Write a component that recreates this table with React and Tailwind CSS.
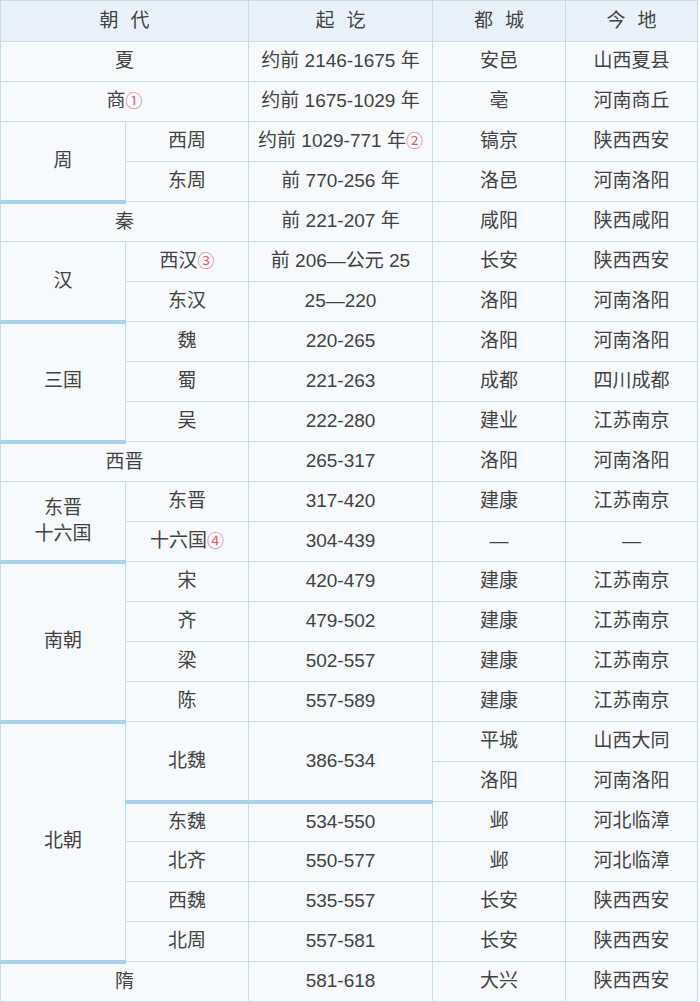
import React from "react";

const cell = "border border-[#c6dee6] p-0 text-center align-middle";
const thick = "border-b-4 border-b-[#a8d3ec]";

function Mark({ n }) {
  return <span className="text-[#e0606e] text-[17px]">{n}</span>;
}

function R({ children }) {
  return <tr className="h-[40px]">{children}</tr>;
}

// header label with a wide gap between the two characters
function Head({ a, b, span }) {
  return (
    <th colSpan={span} className={`${cell} font-normal`}>
      {a}
      <span className="inline-block w-[12px]" />
      {b}
    </th>
  );
}

export default function App() {
  return (
    <div className="w-[700px] h-[1002px] bg-[#f6fafd] font-['Liberation_Sans','Noto_Sans_CJK_SC',sans-serif] text-[19px] text-[#424242]">
      <table className="table-fixed border-collapse w-[697px] bg-[#f6fafd]">
        <colgroup>
          <col className="w-[125px]" />
          <col className="w-[123px]" />
          <col className="w-[184px]" />
          <col className="w-[133px]" />
          <col className="w-[132px]" />
        </colgroup>
        <thead>
          <tr className="h-[41px] bg-[#e9f2fa]">
            <Head a="朝" b="代" span={2} />
            <Head a="起" b="讫" />
            <Head a="都" b="城" />
            <Head a="今" b="地" />
          </tr>
        </thead>
        <tbody>
          <R>
            <td colSpan={2} className={cell}>夏</td>
            <td className={cell}>约前 2146-1675 年</td>
            <td className={cell}>安邑</td>
            <td className={cell}>山西夏县</td>
          </R>
          <R>
            <td colSpan={2} className={cell}>商<Mark n="①" /></td>
            <td className={cell}>约前 1675-1029 年</td>
            <td className={cell}>亳</td>
            <td className={cell}>河南商丘</td>
          </R>
          <R>
            <td rowSpan={2} className={`${cell} ${thick}`}>周</td>
            <td className={cell}>西周</td>
            <td className={cell}>约前 1029-771 年<Mark n="②" /></td>
            <td className={cell}>镐京</td>
            <td className={cell}>陕西西安</td>
          </R>
          <R>
            <td className={cell}>东周</td>
            <td className={cell}>前 770-256 年</td>
            <td className={cell}>洛邑</td>
            <td className={cell}>河南洛阳</td>
          </R>
          <R>
            <td colSpan={2} className={cell}>秦</td>
            <td className={cell}>前 221-207 年</td>
            <td className={cell}>咸阳</td>
            <td className={cell}>陕西咸阳</td>
          </R>
          <R>
            <td rowSpan={2} className={`${cell} ${thick}`}>汉</td>
            <td className={cell}>西汉<Mark n="③" /></td>
            <td className={cell}>前 206—公元 25</td>
            <td className={cell}>长安</td>
            <td className={cell}>陕西西安</td>
          </R>
          <R>
            <td className={cell}>东汉</td>
            <td className={cell}>25—220</td>
            <td className={cell}>洛阳</td>
            <td className={cell}>河南洛阳</td>
          </R>
          <R>
            <td rowSpan={3} className={`${cell} ${thick}`}>三国</td>
            <td className={cell}>魏</td>
            <td className={cell}>220-265</td>
            <td className={cell}>洛阳</td>
            <td className={cell}>河南洛阳</td>
          </R>
          <R>
            <td className={cell}>蜀</td>
            <td className={cell}>221-263</td>
            <td className={cell}>成都</td>
            <td className={cell}>四川成都</td>
          </R>
          <R>
            <td className={cell}>吴</td>
            <td className={cell}>222-280</td>
            <td className={cell}>建业</td>
            <td className={cell}>江苏南京</td>
          </R>
          <R>
            <td colSpan={2} className={cell}>西晋</td>
            <td className={cell}>265-317</td>
            <td className={cell}>洛阳</td>
            <td className={cell}>河南洛阳</td>
          </R>
          <R>
            <td rowSpan={2} className={`${cell} ${thick} leading-[26px]`}>东晋<br />十六国</td>
            <td className={cell}>东晋</td>
            <td className={cell}>317-420</td>
            <td className={cell}>建康</td>
            <td className={cell}>江苏南京</td>
          </R>
          <R>
            <td className={cell}>十六国<Mark n="④" /></td>
            <td className={cell}>304-439</td>
            <td className={cell}>—</td>
            <td className={cell}>—</td>
          </R>
          <R>
            <td rowSpan={4} className={`${cell} ${thick}`}>南朝</td>
            <td className={cell}>宋</td>
            <td className={cell}>420-479</td>
            <td className={cell}>建康</td>
            <td className={cell}>江苏南京</td>
          </R>
          <R>
            <td className={cell}>齐</td>
            <td className={cell}>479-502</td>
            <td className={cell}>建康</td>
            <td className={cell}>江苏南京</td>
          </R>
          <R>
            <td className={cell}>梁</td>
            <td className={cell}>502-557</td>
            <td className={cell}>建康</td>
            <td className={cell}>江苏南京</td>
          </R>
          <R>
            <td className={cell}>陈</td>
            <td className={cell}>557-589</td>
            <td className={cell}>建康</td>
            <td className={cell}>江苏南京</td>
          </R>
          <R>
            <td rowSpan={6} className={`${cell} ${thick}`}>北朝</td>
            <td rowSpan={2} className={`${cell} ${thick}`}>北魏</td>
            <td rowSpan={2} className={`${cell} ${thick}`}>386-534</td>
            <td className={cell}>平城</td>
            <td className={cell}>山西大同</td>
          </R>
          <R>
            <td className={cell}>洛阳</td>
            <td className={cell}>河南洛阳</td>
          </R>
          <R>
            <td className={cell}>东魏</td>
            <td className={cell}>534-550</td>
            <td className={cell}>邺</td>
            <td className={cell}>河北临漳</td>
          </R>
          <R>
            <td className={cell}>北齐</td>
            <td className={cell}>550-577</td>
            <td className={cell}>邺</td>
            <td className={cell}>河北临漳</td>
          </R>
          <R>
            <td className={cell}>西魏</td>
            <td className={cell}>535-557</td>
            <td className={cell}>长安</td>
            <td className={cell}>陕西西安</td>
          </R>
          <R>
            <td className={cell}>北周</td>
            <td className={cell}>557-581</td>
            <td className={cell}>长安</td>
            <td className={cell}>陕西西安</td>
          </R>
          <R>
            <td colSpan={2} className={cell}>隋</td>
            <td className={cell}>581-618</td>
            <td className={cell}>大兴</td>
            <td className={cell}>陕西西安</td>
          </R>
        </tbody>
      </table>
    </div>
  );
}
